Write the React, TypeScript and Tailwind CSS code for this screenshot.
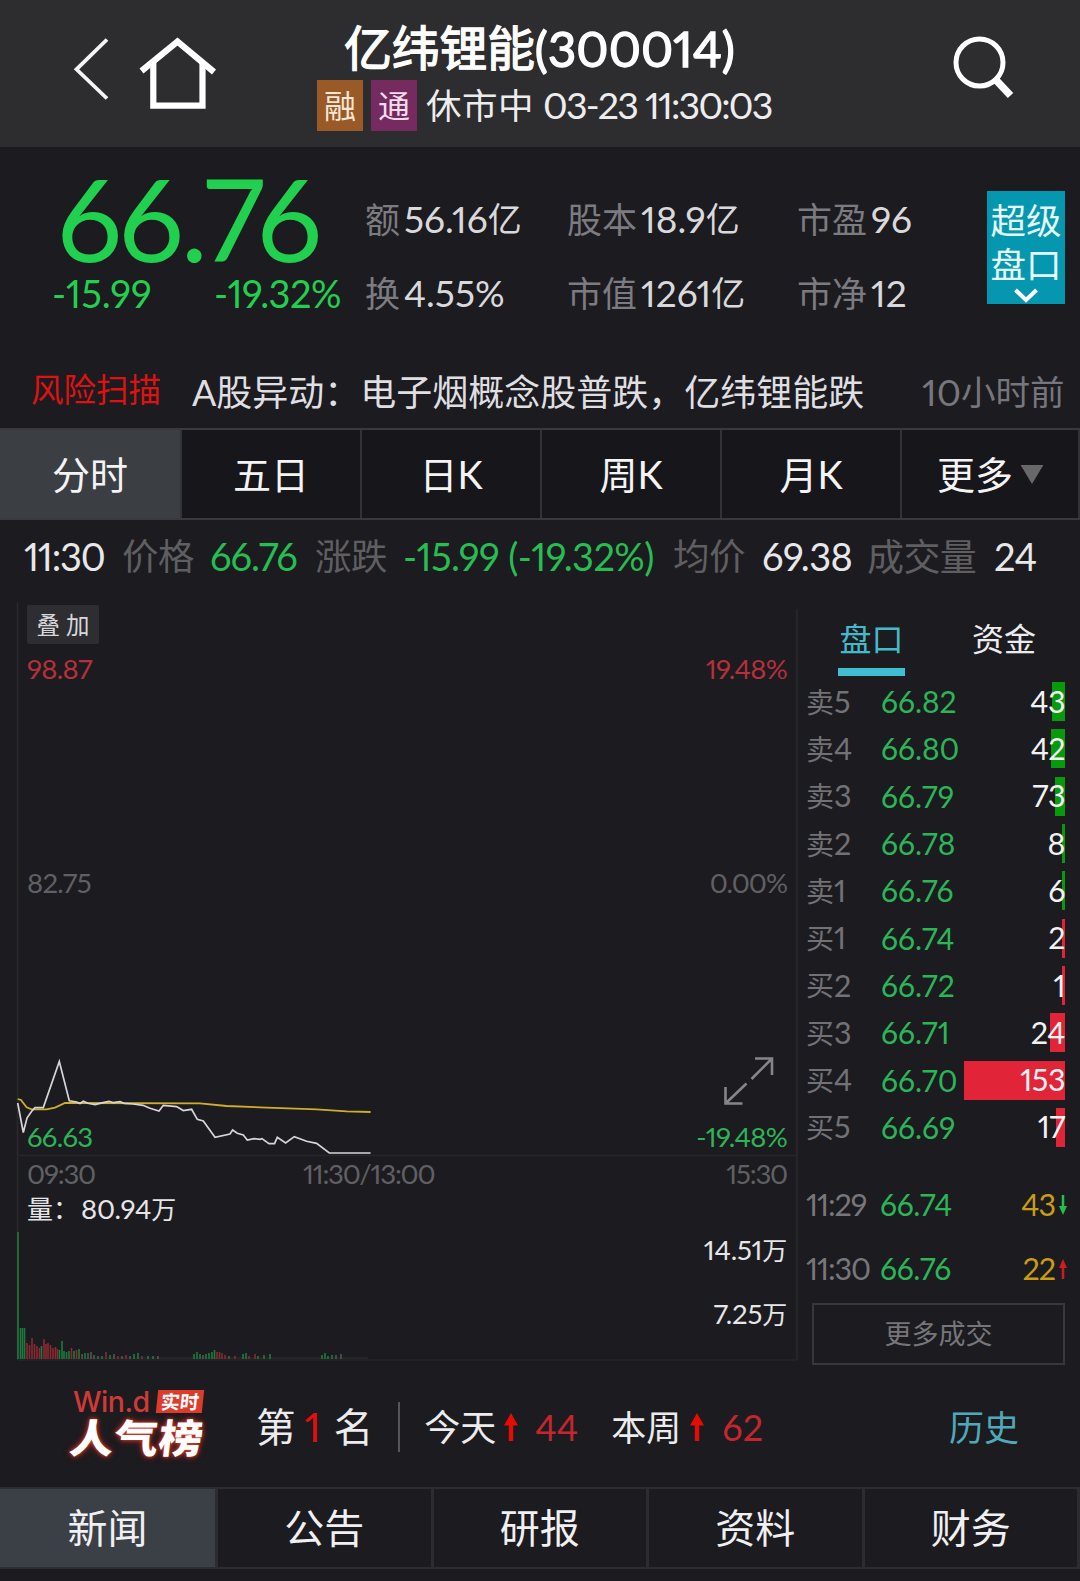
"use client";

import React from 'react';
import clsx from 'clsx';

interface OrderRow {
    label: string;
    level: string;
    price: string;
    volume: string;
    bar: number;
    side: 'sell' | 'buy';
}

const stats = [
    {
        width: 'w-[202px]',
        items: [
            { label: '额', value: '56.16', unit: '亿' },
            { label: '换', value: '4.55%', unit: '' },
        ],
    },
    {
        width: 'w-[230px]',
        items: [
            { label: '股本', value: '18.9', unit: '亿' },
            { label: '市值', value: '1261', unit: '亿' },
        ],
    },
    {
        width: 'w-[190px]',
        items: [
            { label: '市盈', value: '96', unit: '' },
            { label: '市净', value: '12', unit: '' },
        ],
    },
];

const orders: OrderRow[] = [
    { label: '卖', level: '5', price: '66.82', volume: '43', bar: 13, side: 'sell' },
    { label: '卖', level: '4', price: '66.80', volume: '42', bar: 14, side: 'sell' },
    { label: '卖', level: '3', price: '66.79', volume: '73', bar: 10, side: 'sell' },
    { label: '卖', level: '2', price: '66.78', volume: '8', bar: 3, side: 'sell' },
    { label: '卖', level: '1', price: '66.76', volume: '6', bar: 3, side: 'sell' },
    { label: '买', level: '1', price: '66.74', volume: '2', bar: 3, side: 'buy' },
    { label: '买', level: '2', price: '66.72', volume: '1', bar: 3, side: 'buy' },
    { label: '买', level: '3', price: '66.71', volume: '24', bar: 15, side: 'buy' },
    { label: '买', level: '4', price: '66.70', volume: '153', bar: 101, side: 'buy' },
    { label: '买', level: '5', price: '66.69', volume: '17', bar: 9, side: 'buy' },
];

const trades = [
    { time: '11:29', price: '66.74', volume: '43', up: false },
    { time: '11:30', price: '66.76', volume: '22', up: true },
];

const periodTabs = ['分时', '五日', '日K', '周K', '月K'];
const infoTabs = ['新闻', '公告', '研报', '资料', '财务'];

// [x, height, colour]: g = green, r = red, n = neutral
const volumes: [number, number, string][] = [
    [18, 127, 'g'], [20.5, 31, 'g'], [22.5, 31, 'g'], [24.5, 31, 'g'],
    [27, 16, 'r'], [29.5, 14, 'r'], [32, 21, 'r'], [34.5, 15, 'r'], [37, 13, 'r'], [39.5, 11, 'r'],
    [41.5, 13, 'g'], [44, 20, 'r'], [46, 15, 'r'], [48, 16, 'r'], [50.5, 14, 'r'], [53, 11, 'r'],
    [55.5, 12, 'r'], [57.5, 10, 'r'], [59.5, 9, 'g'], [62, 18, 'g'], [64, 8, 'g'], [66.5, 7, 'g'],
    [69, 8, 'g'], [71.5, 11, 'r'], [74, 8, 'g'], [76.5, 9, 'r'], [79, 10, 'g'], [82, 5, 'n'],
    [85, 6, 'g'], [88, 6, 'n'], [91, 7, 'n'], [94, 4, 'n'], [98, 3, 'n'], [102, 3, 'g'],
    [106, 7, 'r'], [110, 4, 'g'], [114, 5, 'n'], [118, 3, 'r'], [122, 3, 'n'], [126, 4, 'r'],
    [130, 3, 'n'], [134, 5, 'g'], [138, 6, 'g'], [142, 3, 'r'], [148, 3, 'g'], [153, 3, 'g'], [158, 3, 'n'],
    [194, 5, 'g'], [197, 7, 'g'], [200, 5, 'g'], [203, 4, 'n'], [206, 5, 'g'], [209, 6, 'g'],
    [212, 7, 'g'], [214.5, 9, 'g'], [217, 7, 'r'], [219.5, 7, 'r'], [222, 6, 'r'], [225, 4, 'r'],
    [229, 3, 'n'], [235, 3, 'r'], [243, 5, 'g'], [246, 6, 'g'], [249, 3, 'r'], [255, 5, 'r'],
    [258, 3, 'g'], [264, 4, 'g'], [270, 5, 'g'], [322, 4, 'g'], [325, 6, 'g'], [328, 3, 'g'],
    [332, 4, 'g'], [336, 4, 'n'], [341, 5, 'n'],
];

const volumeFill: Record<string, string> = { g: '#1d7a3c', r: '#8b2a30', n: '#4c5a50' };

const priceLine =
    '17.7,1103 23.3,1132.5 27,1118 31.5,1111.5 35,1107.6 43.3,1107.6 59.3,1061.5 69.3,1100.8 76.6,1102 80,1103.5 83.3,1101.3 88,1103.3 95,1104.6 103,1102.6 109,1101.3 113,1102.6 120,1101.6 124,1103.3 133,1104 143,1105.3 150,1108.3 159,1111 163.3,1105.3 176.6,1106.6 183.3,1110.6 191.6,1109.3 197.3,1119.3 203.3,1121 215,1137.3 230,1134 232.6,1130 237.3,1133.3 243.3,1135 247.3,1140 254,1138.6 260,1139.3 262,1138.6 269,1143.6 274.5,1143.6 277.3,1137.3 285.6,1143 294.3,1136.6 306.6,1141.3 316.6,1143.3 329.3,1153 370.6,1153';

const averageLine =
    '17.7,1099 21,1100 26.6,1107.3 31.6,1109.3 46.6,1109.3 55,1107.6 65,1103 200,1103.3 226.6,1106 266.6,1107.6 316.6,1109.3 346.6,1111.3 370.6,1112';

function Arrow({ up, className }: { up: boolean; className?: string }) {
    return (
        <svg viewBox="0 0 14 28" preserveAspectRatio="none" className={className}>
            <path
                d={up ? 'M7 0L14 12.5H9.2V28H4.8V12.5H0Z' : 'M7 28L14 15.5H9.2V0H4.8V15.5H0Z'}
                fill="currentColor"
            />
        </svg>
    );
}

function Header() {
    return (
        <header className="flex h-[147px] bg-[#2d2d30]">
            {/* Back + home */}
            <div className="flex w-[317px] pl-[72px] pt-[33px]">
                <svg width="38" height="72" viewBox="0 0 38 72" fill="none" stroke="#f4f4f6" strokeWidth="3.800">
                    <path d="M35 6.500L4.500 36.300L35 65.500" />
                </svg>
                <svg width="78" height="80" viewBox="0 0 78 80" fill="none" stroke="#fff" strokeWidth="6.200" className="ml-[28px]">
                    <path d="M3.500 38L39.500 8.500L76 39" />
                    <path d="M15.300 30V72.600H64.500V30" />
                </svg>
            </div>

            {/* Title */}
            <div className="flex w-[460px] flex-col whitespace-nowrap">
                <div className="mt-[18px] flex h-[60px] items-center pl-[27px] leading-[60px] text-white [-webkit-text-stroke:1.300px_#fff]">
                    <span className="text-[48px] tracking-[-0.3px]">亿纬锂能</span>
                    <span className="text-[49px] tracking-[0.1px]">(300014)</span>
                </div>
                <div className="mt-[2px] flex h-[51px] items-center text-[#ededee]">
                    <span className="flex h-[51px] w-[46px] shrink-0 items-center justify-center bg-[#9a5a28] text-[32px] text-[#f6e6d6]">融</span>
                    <span className="ml-[8px] flex h-[51px] w-[46px] shrink-0 items-center justify-center bg-[#752a60] text-[32px] text-[#f3dcec]">通</span>
                    <span className="ml-[9px] text-[35.500px] tracking-[0.5px]">休市中</span>
                    <span className="ml-[9px] whitespace-pre text-[37.500px] tracking-[-1.800px]">03-23 11:30:03</span>
                </div>
            </div>

            <svg width="64" height="68" viewBox="0 0 64 68" fill="none" stroke="#fff" className="ml-[175px] mt-[33px]">
                <circle cx="27.500" cy="29.500" r="23.500" strokeWidth="5" />
                <path d="M43.500 46.500L58.500 62.500" strokeWidth="7.500" />
            </svg>
        </header>
    );
}

function Quote() {
    return (
        <section className="flex h-[205px]">
            <div className="w-[365px] text-[#22d04f]">
                <div className="mt-[8px] h-[124px] pl-[57px] text-[115px] leading-[124px] tracking-[-3.200px]">66.76</div>
                <div className="mt-[-2px] flex h-[32px] justify-between pl-[52px] pr-[24px] text-[38px] leading-[32px]">
                    <span>-15.99</span>
                    <span className="tracking-[-0.5px]">-19.32%</span>
                </div>
            </div>

            {stats.map((col) => (
                <div key={col.width} className={clsx('pt-[35px]', col.width)}>
                    {col.items.map((item) => (
                        <div key={item.label} className="flex h-[74px] items-center leading-[74px] text-[#d9d9dc]">
                            <span className="text-[35px] text-[#7c7b81]">{item.label}</span>
                            <span className="ml-[4px] text-[37px]">{item.value}</span>
                            <span className="text-[34px]">{item.unit}</span>
                        </div>
                    ))}
                </div>
            ))}

            <div className="mt-[44px] flex h-[113px] w-[78px] flex-col items-center bg-[#0697b0] pt-[8px] text-[35.500px] leading-[44px] text-[#e6f9fb]">
                <span>超级</span>
                <span>盘口</span>
                <svg width="26" height="16" viewBox="0 0 26 16" fill="none" stroke="#fff" strokeWidth="4">
                    <path d="M2.500 3L13 13L23.500 3" />
                </svg>
            </div>
        </section>
    );
}

function NewsLine() {
    return (
        <div className="flex h-[76px] items-center whitespace-nowrap pl-[31px]">
            <span className="w-[161px] text-[32.500px] text-[#df1212]">风险扫描</span>
            <span className="w-[730px] pt-1 text-[36px] text-[#dfdfe2]">A股异动：电子烟概念股普跌，亿纬锂能跌</span>
            <span className="flex items-center pt-1 text-[34.500px] text-[#77767e]">
                <span className="text-[37px]">10</span>小时前
            </span>
        </div>
    );
}

function PeriodTabs() {
    return (
        <nav className="flex h-[92px] border-y-2 border-[#3a3a3e] bg-[#17171b] text-[38px] text-[#f4f4f5]">
            {periodTabs.map((tab, i) => (
                <div
                    key={tab}
                    className={clsx(
                        'flex items-center justify-center border-r-2 border-[#333337]',
                        i === 0 ? 'w-[182px] bg-[#3b3f44]' : 'w-[180px]'
                    )}
                >
                    {tab}
                </div>
            ))}
            <div className="flex w-[178px] items-center border-r-2 border-[#333337] pl-[35px]">
                更多
                <svg width="24" height="19" viewBox="0 0 24 20" className="ml-[7px]">
                    <path d="M0 0H24L12 20Z" fill="#68686b" />
                </svg>
            </div>
        </nav>
    );
}

function TickInfo() {
    return (
        <div className="flex h-[83px] items-center whitespace-nowrap pb-[10px] pl-[24px] text-[38px] tracking-[-0.600px] text-[#e8e8ea]">
            <span className="w-[98px] tracking-[-1.200px]">11:30</span>
            <span className="w-[88px] text-[36.500px] text-[#5f5f62]">价格</span>
            <span className="w-[105px] tracking-[-1px] text-[#27bd52]">66.76</span>
            <span className="w-[88px] text-[36.500px] text-[#5f5f62]">涨跌</span>
            <span className="w-[270px] text-[#27bd52]">-15.99 (-19.32%)</span>
            <span className="w-[89px] text-[36.500px] text-[#5f5f62]">均价</span>
            <span className="w-[105px]">69.38</span>
            <span className="w-[127px] text-[37px] text-[#5f5f62]">成交量</span>
            <span>24</span>
        </div>
    );
}

function Chart() {
    return (
        <div className="relative h-[759px] w-[798px]">
            <svg width="798" height="759" viewBox="0 603 798 759" fill="none" className="absolute inset-0">
                <path d="M17.500 603V1360M797 609V1360" stroke="#2a2a2d" strokeWidth="1.500" />
                <path d="M18 1155.500H797M18 1360H797" stroke="#262729" strokeWidth="1.500" />
                <path d="M85 1358H368" stroke="#2c3431" />
                {volumes.map(([x, h, c]) => (
                    <rect key={x} x={x - 0.8} y={1359 - h} width="1.600" height={h} fill={volumeFill[c]} />
                ))}
                <polyline points={averageLine} stroke="#cfae2e" strokeWidth="1.800" />
                <polyline points={priceLine} stroke="#d6d6d8" strokeWidth="1.700" />
                <g stroke="#86868a" strokeWidth="2.600">
                    <path d="M751.500 1079L772 1058.500M755 1058.500H772V1075" />
                    <path d="M746.500 1083.500L725.500 1103.500M725.500 1087V1103.500H742.500" />
                </g>
            </svg>

            {/* Axis labels */}
            <div className="relative flex flex-col pl-[27px] pr-[11px] pt-[2px] text-[27.500px] leading-[32px] tracking-[-0.700px]">
                <span className="flex h-[39px] w-[72px] items-center justify-center gap-[6px] rounded-[2px] bg-[#2e2d32] text-[23.500px] tracking-normal text-[#d8d8da]">
                    <span>叠</span>
                    <span>加</span>
                </span>
                <div className="mt-[9px] flex justify-between text-[#b5303a]">
                    <span>98.87</span>
                    <span>19.48%</span>
                </div>
                <div className="mt-[182px] flex justify-between text-[#606064]">
                    <span>82.75</span>
                    <span className="tracking-[-1px]">0.00%</span>
                </div>
                <div className="mt-[222px] flex justify-between text-[#2bb558]">
                    <span>66.63</span>
                    <span>-19.48%</span>
                </div>
                <div className="mt-[5px] flex tracking-[-1.200px] text-[#606064]">
                    <span className="w-[276px]">09:30</span>
                    <span>11:30/13:00</span>
                    <span className="ml-auto">15:30</span>
                </div>
                <div className="mt-[3px] flex items-center text-[#e6e6e8]">
                    <span className="text-[26px] tracking-normal">量：</span>
                    <span className="ml-[2px] tracking-[-0.2px]">80.94</span>
                    <span className="text-[25px]">万</span>
                </div>
                <div className="mt-[9px] flex items-center justify-end tracking-[-0.2px] text-[#e6e6e8]">
                    14.51<span className="text-[25px]">万</span>
                </div>
                <div className="mt-[32px] flex items-center justify-end tracking-[-0.2px] text-[#e6e6e8]">
                    7.25<span className="text-[25px]">万</span>
                </div>
            </div>
        </div>
    );
}

function OrderBook() {
    return (
        <aside className="flex w-[282px] flex-col pl-[8px] pr-[15px]">
            <div className="flex pl-[32px] pt-[14px] text-[32px] leading-[44px]">
                <div className="flex w-[67px] flex-col items-center text-[#43b9cb]">
                    <span>盘口</span>
                    <span className="mt-[7px] h-[8px] w-[67px] bg-[#3fbdd1]" />
                </div>
                <span className="ml-[67px] text-[#ececee]">资金</span>
            </div>

            <div className="mt-[2px] flex flex-col">
                {orders.map((row) => (
                    <div key={row.label + row.level} className="flex h-[47.300px] items-center text-[30.500px]">
                        <span className="flex w-[75px] items-center text-[#717176]">
                            <span className="text-[28px]">{row.label}</span>
                            {row.level}
                        </span>
                        <span className="w-[83px] text-[30px] text-[#2bb558]">{row.price}</span>
                        <span className="relative flex h-[39px] flex-1 items-center justify-end text-[30.500px] tracking-[-0.5px] text-[#f2f2f2]">
                            <span
                                className={clsx('absolute right-0 top-0 h-full', row.side === 'sell' ? 'bg-[#079a0d]' : 'bg-[#e12438]')}
                                style={{ width: row.bar }}
                            />
                            <span className="relative">{row.volume}</span>
                        </span>
                    </div>
                ))}
            </div>

            <div className="mt-[22px] flex flex-col">
                {trades.map((t) => (
                    <div key={t.time} className="flex h-[64px] items-center text-[30.500px]">
                        <span className="w-[74px] tracking-[-1.100px] text-[#77777b]">{t.time}</span>
                        <span className="w-[84px] text-[30px] tracking-[-0.3px] text-[#2bb558]">{t.price}</span>
                        <span className="flex-1 text-right tracking-[-1px] text-[#c79d14]">{t.volume}</span>
                        <Arrow up={t.up} className={clsx('-mr-[2px] ml-[4px] h-[20px] w-[8px]', t.up ? 'text-[#d01c1c]' : 'text-[#1fc24c]')} />
                    </div>
                ))}
            </div>

            <div className="ml-[6px] mt-[2px] flex h-[62px] shrink-0 items-center justify-center border-2 border-[#38383c] text-[27px] text-[#76767a]">
                更多成交
            </div>
        </aside>
    );
}

function RankRow() {
    return (
        <section className="flex h-[125px] items-center pt-[5px] text-[36px] text-[#ececee]">
            <div className="-mt-[6px] flex w-[256px] flex-col pl-[70px]">
                <div className="flex h-[24px] items-center">
                    <span className="ml-[3px] w-[84px] font-[Inter] text-[28.500px] font-medium leading-[24px] tracking-[-0.5px] text-[#cf3a36]">Win.d</span>
                    <span className="flex h-[23px] w-[46px] -skew-x-6 items-center justify-center bg-[#dd3b2c] text-[19px] font-bold leading-[23px] text-white">
                        实时
                    </span>
                </div>
                <span className="mt-[3px] w-[140px] -skew-x-6 scale-y-[0.9] whitespace-nowrap text-[44px] font-black leading-[42px] tracking-[0.5px] text-white [text-shadow:0_0_4px_#e0402c,0_0_8px_#b8281c]">
                    人气榜
                </span>
            </div>
            <span className="text-[39.500px]">第</span>
            <span className="ml-[9px] text-[41px] text-[#e01010]">1</span>
            <span className="ml-[13px] text-[39.500px]">名</span>
            <span className="ml-[25px] h-[50px] w-[2px] bg-[#55555a]" />
            <span className="ml-[24px]">今天</span>
            <Arrow up className="ml-[8px] h-[28px] w-[14px] text-[#e40d06]" />
            <span className="ml-[17px] text-[36px] text-[#c5262e]">44</span>
            <span className="ml-[33px] text-[35px]">本周</span>
            <Arrow up className="ml-[9px] h-[28px] w-[14px] text-[#e40d06]" />
            <span className="ml-[18px] text-[36px] text-[#c5262e]">62</span>
            <span className="ml-auto mr-[61px] text-[35px] text-[#4fa9ba]">历史</span>
        </section>
    );
}

function InfoTabs() {
    return (
        <nav className="flex h-[82px] border-y-2 border-[#2c2d30] text-[40px] text-[#f0f0f2]">
            {infoTabs.map((tab, i) => (
                <div
                    key={tab}
                    className={clsx(
                        'flex shrink-0 items-center justify-center border-r-[3px] border-[#2c2c30]',
                        i === 0 ? 'w-[218px] bg-[#3a4045]' : 'w-[215.500px]'
                    )}
                >
                    {tab}
                </div>
            ))}
        </nav>
    );
}

export default function App() {
    return (
        <main className="h-[1581px] w-[1080px] overflow-hidden bg-[#1c1b1f] font-[Lato,'Noto_Sans_CJK_SC',sans-serif] proportional-nums">
            <Header />
            <Quote />
            <NewsLine />
            <PeriodTabs />
            <TickInfo />
            <div className="flex h-[759px]">
                <Chart />
                <OrderBook />
            </div>
            <RankRow />
            <InfoTabs />
        </main>
    );
}
